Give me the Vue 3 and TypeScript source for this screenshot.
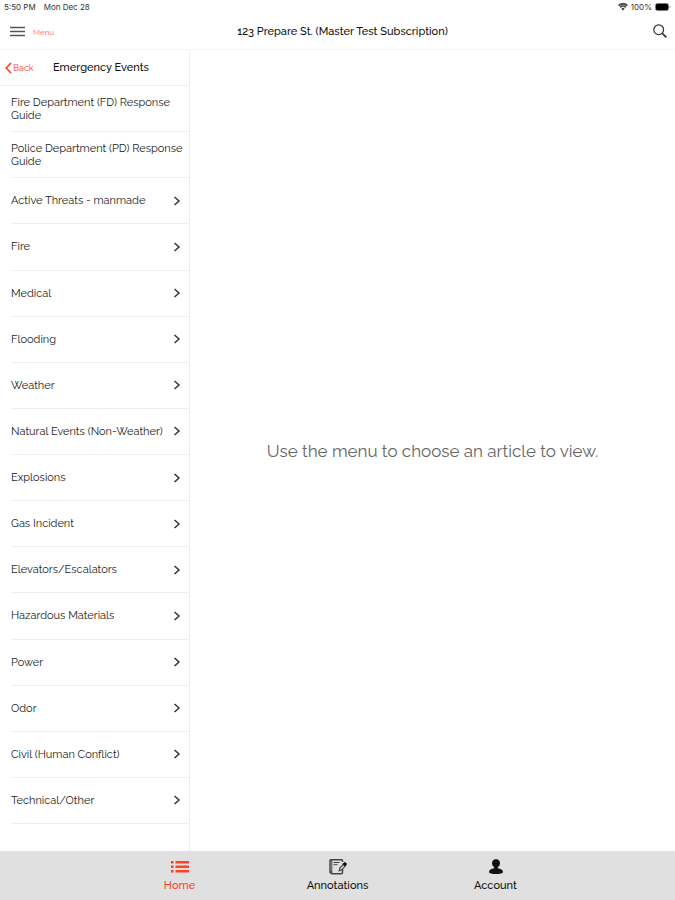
<script setup lang="ts">
import { ref } from 'vue'

interface EventItem {
  title: string
  hasChildren: boolean
}

const items: EventItem[] = [
  { title: 'Fire Department (FD) Response Guide', hasChildren: false },
  { title: 'Police Department (PD) Response Guide', hasChildren: false },
  { title: 'Active Threats - manmade', hasChildren: true },
  { title: 'Fire', hasChildren: true },
  { title: 'Medical', hasChildren: true },
  { title: 'Flooding', hasChildren: true },
  { title: 'Weather', hasChildren: true },
  { title: 'Natural Events (Non-Weather)', hasChildren: true },
  { title: 'Explosions', hasChildren: true },
  { title: 'Gas Incident', hasChildren: true },
  { title: 'Elevators/Escalators', hasChildren: true },
  { title: 'Hazardous Materials', hasChildren: true },
  { title: 'Power', hasChildren: true },
  { title: 'Odor', hasChildren: true },
  { title: 'Civil (Human Conflict)', hasChildren: true },
  { title: 'Technical/Other', hasChildren: true },
]

type Tab = 'Home' | 'Annotations' | 'Account'
const tabs: Tab[] = ['Home', 'Annotations', 'Account']
const activeTab = ref<Tab>('Home')
</script>

<template>
  <div class="app">
    <div class="status">
      <div class="status-side">
        <span>5:50 PM</span>
        <span>Mon Dec 28</span>
      </div>
      <div class="status-side status-right">
        <svg width="10" height="8" viewBox="0 0 10 8" aria-hidden="true">
          <path d="M.6 2.6a6.3 6.3 0 0 1 8.800 0M2.200 4.300a4 4 0 0 1 5.600 0" fill="none" stroke="#444" stroke-width="1.700" />
          <path d="M5 7.600 3.300 5.700a2.400 2.400 0 0 1 3.400 0Z" fill="#444" />
        </svg>
        <span>100%</span>
        <svg width="16" height="8" viewBox="0 0 16 8" aria-hidden="true">
          <rect x=".5" y=".5" width="13" height="7" rx="1.800" fill="none" stroke="#777" />
          <rect x="1" y="1" width="12" height="6" rx="1" fill="#000" />
          <path d="M14.600 2.800v2.400c1-.3 1-2.100 0-2.400Z" fill="#555" />
        </svg>
      </div>
    </div>

    <header class="navbar">
      <button type="button" class="menu-button">
        <svg width="16" height="12" viewBox="0 0 16 12" aria-hidden="true">
          <path d="M0 1.500h15M0 5.500h15M0 9.500h15" stroke="#555" stroke-width="1.600" />
        </svg>
        <span>Menu</span>
      </button>
      <h1 class="nav-title">123 Prepare St. (Master Test Subscription)</h1>
      <button type="button" class="search-button" aria-label="Search">
        <svg width="14" height="16" viewBox="0 0 14 16" fill="none" stroke="#333" aria-hidden="true">
          <circle cx="5.700" cy="5.700" r="4.900" stroke-width="1.200" />
          <path d="m9.300 9.300 4 4" stroke-width="1.800" />
        </svg>
      </button>
    </header>

    <div class="body">
      <nav class="sidebar" aria-label="Emergency Events">
        <div class="side-head">
          <button type="button" class="back">
            <svg width="7" height="12" viewBox="0 0 7 12" aria-hidden="true">
              <path d="M6 1 1.200 6 6 11" fill="none" stroke="#ff3b24" stroke-width="1.600" />
            </svg>
            <span>Back</span>
          </button>
          <h2 class="side-title">Emergency Events</h2>
        </div>
        <ul class="list">
          <li v-for="item in items" :key="item.title">
            <a href="#" class="row" @click.prevent>
              <span class="row-label">{{ item.title }}</span>
              <svg v-if="item.hasChildren" class="chevron" width="8" height="10" viewBox="0 0 8 10" aria-hidden="true">
                <path d="M1.500 1 6 5 1.500 9" fill="none" stroke="#333" stroke-width="1.500" />
              </svg>
            </a>
          </li>
        </ul>
      </nav>
      <main class="content">
        <p class="message">Use the menu to choose an article to view.</p>
      </main>
    </div>

    <nav class="tabbar" aria-label="Main">
      <button
        v-for="tab in tabs"
        :key="tab"
        type="button"
        class="tab"
        :class="{ active: tab === activeTab }"
        @click="activeTab = tab"
      >
        <svg v-if="tab === 'Home'" width="18" height="16" viewBox="0 0 18 16" fill="currentColor" aria-hidden="true">
          <path d="M0 2h2.500v2.500H0zM0 6.500h2.500V9H0zM0 11h2.500v2.500H0zM4.500 2H18v2.500H4.500zM4.500 6.500H18V9H4.500zM4.500 11H18v2.500H4.500z" />
        </svg>
        <svg v-else-if="tab === 'Annotations'" width="18" height="16" viewBox="0 0 18 16" fill="none" stroke="#444" aria-hidden="true">
          <path d="M13.500 3V1.800Q13.500.7 12.300.7H2.200Q1 .7 1 1.900v11.200l1.600 1.600h9.700q1.200 0 1.200-1.200V10" stroke-width="1.500" />
          <path d="M2.800 1v11.600M1 12.600h1.800v2M4.500 3.500h6M4.500 5.700h4" stroke-width="1" />
          <path d="m10.200 11.800.7-2.700 3.500-3.700 1.800 1.700-3.500 3.700Z" stroke-width="1.200" />
          <path d="m13.800 5.100 1.400-1.400q.7-.5 1.400.1l.7.700q.6.700 0 1.300l-1.300 1.400Z" fill="#111" stroke="#111" stroke-width=".8" />
        </svg>
        <svg v-else width="16" height="16" viewBox="0 0 16 16" fill="#111" aria-hidden="true">
          <circle cx="8" cy="4.200" r="3.900" />
          <path d="M6.200 7h3.600v2.300c2.900.4 5.200 1.500 5.200 3.700 0 2.700-14 2.700-14 0 0-2.200 2.300-3.300 5.200-3.700Z" />
        </svg>
        <span>{{ tab }}</span>
      </button>
    </nav>
  </div>
</template>

<style>
body {
  margin: 0;
}
</style>

<style scoped>
.app {
  display: flex;
  flex-direction: column;
  min-height: 100vh;
  background: #fff;
  color: #333;
  font-family: Raleway, "Open Sans", "Noto Sans", sans-serif;
  font-size: 11px;
}

button {
  border: 0;
  padding: 0;
  background: none;
  font: inherit;
  color: inherit;
  cursor: pointer;
}

.status {
  display: flex;
  justify-content: space-between;
  align-items: center;
  height: 14px;
  padding: 0 4px;
  font-family: Inter, sans-serif;
  font-size: 8px;
}

.status-side {
  display: flex;
  align-items: center;
  gap: 8px;
}

.status-right {
  gap: 3px;
}

.navbar {
  display: grid;
  grid-template-columns: 1fr auto 1fr;
  align-items: center;
  height: 35px;
  padding: 0 8px 0 10px;
  border-bottom: 1px solid #f4f4f4;
}

.menu-button {
  display: flex;
  align-items: center;
  justify-self: start;
  gap: 7px;
  color: #ff6a58;
  font-size: 8px;
}

.nav-title {
  margin: 0;
  padding-left: 8px;
  color: #111;
  font-size: 11px;
  font-weight: 500;
  line-height: 16px;
}

.search-button {
  display: flex;
  justify-self: end;
}

.body {
  display: flex;
  flex: 1;
}

.sidebar {
  display: flex;
  flex-direction: column;
  box-sizing: border-box;
  width: 28%;
  min-width: 190px;
  padding-bottom: 27px;
  border-right: 1px solid #eee;
}

.side-head {
  display: grid;
  grid-template-columns: 48px 1fr;
  align-items: center;
  height: 35px;
  padding-left: 5px;
  border-bottom: 1px solid #eee;
}

.back {
  display: flex;
  align-items: center;
  gap: 1px;
  color: #ff3b24;
  font-size: 9px;
}

.side-title {
  margin: 0;
  color: #111;
  font-size: 11px;
  font-weight: 500;
  line-height: 16px;
}

.list {
  display: grid;
  flex: 1;
  grid-auto-rows: 1fr;
  margin: 0;
  padding: 0 0 0 11px;
  list-style: none;
}

.list li {
  display: flex;
  border-bottom: 1px solid #eee;
}

.row {
  display: flex;
  flex: 1;
  align-items: center;
  justify-content: space-between;
  color: #222;
  line-height: 13px;
  text-decoration: none;
}

.chevron {
  flex: none;
  margin-right: 8px;
}

.content {
  display: flex;
  flex: 1;
  align-items: center;
  justify-content: center;
}

.message {
  margin: 0;
  color: #666;
  font-size: 17px;
}

.tabbar {
  display: flex;
  justify-content: center;
  height: 49px;
  background: #e0e0e0;
}

.tab {
  display: flex;
  flex-direction: column;
  align-items: center;
  justify-content: center;
  gap: 4px;
  width: 158px;
  color: #111;
  font-weight: 500;
  line-height: 13px;
}

.tab.active {
  color: #ff4124;
}
</style>
